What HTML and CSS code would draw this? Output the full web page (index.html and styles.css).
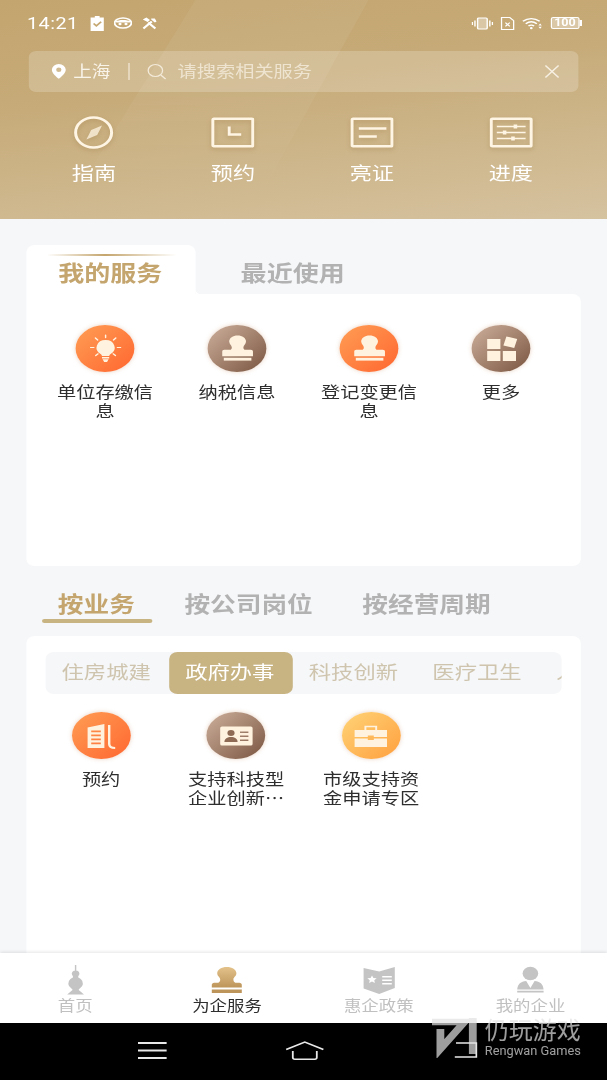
FILE: index.html
```html
<!DOCTYPE html>
<html lang="zh-CN">
<head>
    <meta charset="UTF-8">
    <meta name="viewport" content="width=device-width, initial-scale=1.0">
    <title>为企服务</title>
    <link rel="stylesheet" href="styles.css">
</head>
<body>
    <div class="screen">
        <header class="top">
            <div class="status">
                <span class="clock">14:21</span>
                <svg class="st-icon" width="12" height="15" viewBox="0 0 12 15"><path fill="#fff" d="M4 0h4v1.500h3.500v13.500h-11v-13.500h3.500z"/><path fill="none" stroke="#c6a873" stroke-width="1.600" d="M3 7.500l2.300 2.300 4-4"/></svg>
                <svg class="st-icon" width="15" height="12" viewBox="0 0 15 12"><ellipse cx="7.500" cy="6" rx="7" ry="5" fill="none" stroke="#fff" stroke-width="1.500"/><path fill="#fff" d="M1 4.500c3-2 10-2 13 0l-1 1h-11z"/><circle cx="5" cy="7" r="1.300" fill="#fff"/><circle cx="10" cy="7" r="1.300" fill="#fff"/></svg>
                <svg class="st-icon" width="13" height="13" viewBox="0 0 13 13"><path fill="none" stroke="#fff" stroke-width="1.800" d="M1.500 11.500l7-7M11.500 11.500l-6-6"/><path fill="#fff" d="M1 2.500l3-2 3 2.500-2 2zM8 1.500l3 0 1.500 3-1.500 1-3-3z"/></svg>
                <span class="status-right">
                    <svg width="18" height="13" viewBox="0 0 18 13"><rect x="5" y="1" width="8" height="11" rx="1" fill="rgba(255,255,255,.35)" stroke="#fff" stroke-width="1.200"/><path stroke="#fff" stroke-width="1.200" d="M2.800 3.500v6M15.200 3.500v6M.6 5v3M17.400 5v3"/></svg>
                    <svg width="12" height="15" viewBox="0 0 13 15"><path fill="none" stroke="#fff" stroke-width="1.200" d="M1 1h7.500l3.500 3.500v9.500h-11z"/><path stroke="#fff" stroke-width="1.200" d="M4.500 6.500l4 4M8.500 6.500l-4 4"/></svg>
                    <svg width="17" height="13" viewBox="0 0 18 13"><path fill="none" stroke="#fff" stroke-width="1.500" d="M.8 4.200c4.400-3.800 10.400-3.800 14.800 0M3.300 6.800c3-2.500 6.800-2.500 9.800 0M5.700 9.200c1.500-1.200 3.500-1.200 5 0"/><circle cx="8.200" cy="11.400" r="1.200" fill="#fff"/><path fill="#fff" d="M16 6.500l1.500 2h-3zM14.500 10h3l-1.500 2z"/></svg>
                    <span class="battery">100</span>
                </span>
            </div>

            <div class="search">
                <svg class="pin" width="12" height="15" viewBox="0 0 12 15"><path fill="#fff" fill-rule="evenodd" d="M6 0a5.800 5.800 0 0 1 5.800 5.800c0 3.500-3.500 6.800-5.800 9-2.300-2.200-5.800-5.500-5.800-9a5.800 5.800 0 0 1 5.800-5.800zm0 3.600a2.200 2.200 0 1 0 0 4.400 2.200 2.200 0 0 0 0-4.400z"/></svg>
                <span class="city">上海</span>
                <span class="search-sep"></span>
                <svg class="lens" width="17" height="17" viewBox="0 0 17 17"><circle cx="7.500" cy="7.500" r="6" fill="none" stroke="#f3ead9" stroke-width="1.100"/><path stroke="#f3ead9" stroke-width="1.100" d="M12 12l4 4"/></svg>
                <span class="placeholder">请搜索相关服务</span>
                <svg class="clear" width="12" height="13" viewBox="0 0 12 13"><path stroke="#f6efe2" stroke-width="1.200" d="M.5 .5l11 12M11.500 .5l-11 12"/></svg>
            </div>

            <div class="quick">
                <div class="quick-item">
                    <svg width="34" height="33" viewBox="0 0 34 33"><circle cx="17" cy="16.500" r="15" fill="none" stroke="#fff5e4" stroke-width="2.500"/><path fill="#fff5e4" d="M24 9.500l-4 9.500-9 4.500 4-9.500z" opacity=".75"/></svg>
                    <span>指南</span>
                </div>
                <div class="quick-item">
                    <svg width="36" height="30" viewBox="0 0 36 30"><rect x="1.300" y="1.300" width="33.400" height="27.400" rx="1" fill="none" stroke="#fff5e4" stroke-width="2.600"/><path fill="none" stroke="#fff5e4" stroke-width="2.400" d="M15 9v8h10"/></svg>
                    <span>预约</span>
                </div>
                <div class="quick-item">
                    <svg width="36" height="30" viewBox="0 0 36 30"><rect x="1.300" y="1.300" width="33.400" height="27.400" rx="1" fill="none" stroke="#fff5e4" stroke-width="2.600"/><path fill="none" stroke="#fff5e4" stroke-width="2.400" d="M7 11h23M7 19h15"/></svg>
                    <span>亮证</span>
                </div>
                <div class="quick-item">
                    <svg width="36" height="30" viewBox="0 0 36 30"><rect x="1.300" y="1.300" width="33.400" height="27.400" rx="1" fill="none" stroke="#fff5e4" stroke-width="2.600"/><path fill="none" stroke="#fff5e4" stroke-width="1.500" d="M6 9h24M6 15h24M6 21h24"/><path fill="#fff5e4" d="M20 7h3v4h-3zM11 13h3v4h-3zM18 19h3v4h-3z"/></svg>
                    <span>进度</span>
                </div>
            </div>
        </header>

        <main class="content">
            <div class="tabs">
                <div class="tab tab-active">我的服务</div>
                <div class="tab">最近使用</div>
            </div>
            <section class="panel panel-mine">
                <div class="svc-grid">
                    <div class="svc">
                        <span class="disc disc-orange">
                            <svg width="30" height="30" viewBox="0 0 30 30"><g fill="#fff3e0"><path d="M15 6a7.600 7.600 0 0 1 4.200 13.900c-.9.600-1.100 1.200-1.100 2.100h-6.200c0-.9-.2-1.500-1.100-2.100A7.600 7.600 0 0 1 15 6z"/><path d="M12 23h6v1.500h-6zM12.500 25.300h5l-1.300 2.700h-2.400z"/></g><path stroke="#fff3e0" stroke-width="1.200" stroke-linecap="round" d="M15 1v2.600M6.500 4l1.900 2M23.500 4l-1.900 2M2.500 13.500h2.700M24.800 13.500h2.700M6.800 21.500l1.900-1.700M23.200 21.500l-1.900-1.700"/></svg>
                        </span>
                        <p>单位存缴信息</p>
                    </div>
                    <div class="svc">
                        <span class="disc disc-brown">
                            <svg width="30" height="30" viewBox="0 0 30 30"><use href="#stamp"/></svg>
                        </span>
                        <p>纳税信息</p>
                    </div>
                    <div class="svc">
                        <span class="disc disc-orange">
                            <svg width="30" height="30" viewBox="0 0 30 30"><use href="#stamp"/></svg>
                        </span>
                        <p>登记变更信息</p>
                    </div>
                    <div class="svc">
                        <span class="disc disc-brown">
                            <svg width="30" height="30" viewBox="0 0 30 30"><g fill="#fff3e0"><rect x="3" y="5" width="11" height="10"/><rect x="3" y="17" width="11" height="10"/><rect x="16" y="17" width="11" height="10"/><path d="M19 2.500l9 2.500-2.500 9-9-2.500z"/></g></svg>
                        </span>
                        <p>更多</p>
                    </div>
                </div>
            </section>

            <div class="biz-tabs">
                <div class="biz-tab biz-tab-active">按业务</div>
                <div class="biz-tab">按公司岗位</div>
                <div class="biz-tab">按经营周期</div>
            </div>
            <section class="panel panel-biz">
                <div class="chips">
                    <div class="chip">住房城建</div>
                    <div class="chip chip-active">政府办事</div>
                    <div class="chip">科技创新</div>
                    <div class="chip">医疗卫生</div>
                    <div class="chip">人才服务</div>
                </div>
                <div class="svc-grid svc-grid-biz">
                    <div class="svc">
                        <span class="disc disc-orange">
                            <svg width="30" height="30" viewBox="0 0 30 30"><path fill="#fff3e0" fill-rule="evenodd" d="M4 6.500L18 3v24H4zM7 9.500v1.800H15V9.500zm0 4v1.800H15v-1.800zm0 4v1.800H15v-1.800zm0 4v1.800H15v-1.800z"/><path fill="none" stroke="#fff3e0" stroke-width="2" d="M22 4v19c0 2.500 1 4 5 4"/></svg>
                        </span>
                        <p>预约</p>
                    </div>
                    <div class="svc">
                        <span class="disc disc-brown">
                            <svg width="30" height="30" viewBox="0 0 30 30"><path fill="#fff3e0" fill-rule="evenodd" d="M3 5.500h24a1.500 1.500 0 0 1 1.500 1.500v16a1.500 1.500 0 0 1-1.500 1.500H3A1.500 1.500 0 0 1 1.500 23V7A1.500 1.500 0 0 1 3 5.500zM18 10.500V12h7v-1.500zm0 4V16h7v-1.500zm0 4V20h7v-1.500z"/><circle cx="10.500" cy="12" r="3" fill="#8f6b55"/><path fill="#8f6b55" d="M5 21c0-3.500 2.500-5 5.500-5s5.500 1.500 5.500 5z"/></svg>
                        </span>
                        <p>支持科技型企业创新…</p>
                    </div>
                    <div class="svc">
                        <span class="disc disc-yellow">
                            <svg width="30" height="30" viewBox="0 0 30 30"><path fill="none" stroke="#fff3e0" stroke-width="1.600" d="M10.500 9V5.500h9V9"/><path fill="#fff3e0" d="M1.500 9h27v7H17.500v-1.500h-5V16h-11zM1.500 17.500h11V19h5v-1.500h11V26h-27z"/></svg>
                        </span>
                        <p>市级支持资金申请专区</p>
                    </div>
                </div>
            </section>
        </main>

        <nav class="tabbar">
            <div class="nav-item">
                <svg width="26" height="30" viewBox="0 0 26 30"><path fill="#c4c4c4" d="M12.400 0h1.200v6h-1.200zM13 5.500a3.200 3.200 0 0 1 3 4.300c-.3.800-.9 1.400-.9 2.300 0 .9 1.400 1.300 2.400 2.200a6 6 0 0 1-.8 8.900c-.7.500-1.100 1-1.100 1.800l4.400 4.500H6l4.400-4.500c0-.8-.4-1.300-1.100-1.800a6 6 0 0 1-.8-8.900c1-.9 2.400-1.300 2.400-2.200 0-.9-.6-1.500-.9-2.300A3.200 3.200 0 0 1 13 5.500z"/></svg>
                <span>首页</span>
            </div>
            <div class="nav-item nav-item-active">
                <svg width="30" height="30" viewBox="0 0 30 30"><defs><linearGradient id="gold" x1="0" y1="0" x2="0" y2="1"><stop offset="0" stop-color="#e3c28a"/><stop offset="1" stop-color="#bd955b"/></linearGradient></defs><path fill="url(#gold)" d="M15 2c4.400 0 8 2.600 8 6.300 0 3-2.500 3.800-2.500 6.200 0 1.500.5 2.500 1.500 3.200h3.500c1.200 0 2 1 2 2v2.800h-25v-2.800c0-1 .8-2 2-2H8c1-.7 1.500-1.700 1.500-3.200 0-2.400-2.500-3.200-2.500-6.200C7 4.600 10.600 2 15 2z"/><rect x="2.500" y="24.500" width="25" height="3.500" fill="#bd955b"/></svg>
                <span>为企服务</span>
            </div>
            <div class="nav-item">
                <svg width="30" height="30" viewBox="0 0 30 30"><path fill="#c4c4c4" fill-rule="evenodd" d="M2 3l13 3.500L28 2v21l-13 6L2 23.500zM17.500 11v1.500h8V11zm0 3.500V16h8v-1.500zm0 3.500v1.500h8V18z"/><path fill="#fff" d="M9 10.500l1.200 2.500 2.700.3-2 1.900.5 2.700L9 16.600l-2.400 1.300.5-2.700-2-1.900 2.700-.3z"/></svg>
                <span>惠企政策</span>
            </div>
            <div class="nav-item">
                <svg width="30" height="30" viewBox="0 0 30 30"><ellipse cx="15" cy="8.500" rx="6.500" ry="6.800" fill="#c4c4c4"/><path fill="#c4c4c4" d="M11.500 16l3.500 7 3.500-7c4.500.5 7 2.800 7.500 8.500H4c.5-5.700 3-8 7.500-8.500zM4 25.800h22V27.500H4z"/></svg>
                <span>我的企业</span>
            </div>
        </nav>

        <div class="sysbar">
            <svg class="sys-menu" width="24" height="17" viewBox="0 0 24 17"><path stroke="#e8e8e8" stroke-width="1.800" d="M0 1h24M0 8.500h24M0 16h24"/></svg>
            <svg class="sys-home" width="32" height="19" viewBox="0 0 32 19"><path fill="none" stroke="#e8e8e8" stroke-width="1.500" d="M.5 8.500L16 1l15.500 7.500M6 10v6.500c0 1 .7 1.700 1.700 1.700h16.600c1 0 1.700-.7 1.700-1.700V10"/></svg>
            <svg class="sys-back" width="20" height="16" viewBox="0 0 20 16"><path fill="none" stroke="#e8e8e8" stroke-width="1.500" d="M1 15h18V1H2"/></svg>
        </div>

        <div class="watermark">
            <svg width="38" height="40" viewBox="0 0 38 40"><path fill="none" stroke="rgba(225,225,225,.7)" stroke-width="6.500" d="M0 4h27L7 31V11M34 0v36"/></svg>
            <div class="wm-text">
                <div class="wm-cn">仍玩游戏</div>
                <div class="wm-en">Rengwan Games</div>
            </div>
        </div>
    </div>

    <svg class="defs" width="0" height="0"><defs>
        <g id="stamp" fill="#fff3e0"><path d="M15 1.500c3.900 0 7 2.600 7 6 0 2.800-2.200 3.800-2.200 6.200 0 .8.300 1.500.9 2h5.300c1.100 0 1.800.8 1.800 1.800v4.700H2.200v-4.700c0-1 .7-1.800 1.800-1.800h5.300c.6-.5.900-1.200.9-2 0-2.400-2.200-3.400-2.200-6.200 0-3.400 3.100-6 7-6z"/><rect x="3.500" y="23.800" width="23" height="2.800"/></g>
    </defs></svg>
</body>
</html>
```

FILE: styles.css
```css
:root {
    --gold: #c4a56d;
    --chip-gold: #c8b382;
    --page-bg: #f6f7f9;
    --text: #2e2e2e;
    --muted: #b2b2b2;
}

* {
    margin: 0;
    padding: 0;
    box-sizing: border-box;
}

html, body {
    width: 607px;
    height: 1080px;
    overflow: hidden;
}

body {
    font-family: "Noto Sans CJK SC", "Noto Sans", sans-serif;
    color: var(--text);
    background-color: var(--page-bg);
}

.defs {
    display: block;
}

/* the capture is stretched sideways by 1.2, everything below is laid out at 506px */
.screen {
    position: relative;
    width: 505.83px;
    height: 1080px;
    display: flex;
    flex-direction: column;
    transform: scaleX(1.2);
    transform-origin: 0 0;
    background-color: var(--page-bg);
}

/* Header */
.top {
    position: relative;
    flex: none;
    height: 219px;
    padding: 13px 24px 0;
    background: linear-gradient(172deg, #c3a56f 0%, #c6aa77 35%, #d5c29f 100%);
    overflow: hidden;
}

.top::before {
    content: "";
    position: absolute;
    inset: 0;
    background: rgba(255, 255, 255, 0.06);
    clip-path: polygon(163px 0, 307px 0, 206px 219px, 50px 219px);
    -webkit-mask-image: linear-gradient(to bottom, #000 35%, transparent 90%);
    mask-image: linear-gradient(to bottom, #000 35%, transparent 90%);
}

.status {
    position: relative;
    display: flex;
    align-items: center;
    height: 20px;
    color: #fff;
}

.clock {
    font-family: Roboto, sans-serif;
    font-size: 16.5px;
    letter-spacing: 0.4px;
    margin-left: -1.5px;
    margin-right: 9.5px;
}

.st-icon {
    margin-right: 8px;
}

.status-right {
    margin-left: auto;
    display: flex;
    align-items: center;
    gap: 5px;
    margin-right: -2px;
}

.status-right svg:first-child {
    margin-right: 1px;
}

.status-right svg:nth-child(3) {
    margin: 0 2px 0 1px;
}

.battery {
    position: relative;
    width: 24px;
    height: 12px;
    margin-right: 1px;
    border: 1px solid #fff;
    border-radius: 2px;
    background: rgba(255, 255, 255, 0.35);
    font-family: Roboto, sans-serif;
    font-size: 10.5px;
    font-weight: 700;
    line-height: 10px;
    text-align: center;
}

.battery::after {
    content: "";
    position: absolute;
    right: -3px;
    top: 2px;
    width: 1.5px;
    height: 6px;
    background: #fff;
}

.search {
    position: relative;
    display: flex;
    align-items: center;
    height: 41px;
    margin-top: 18px;
    padding: 0 16px 0 19px;
    border-radius: 6px;
    background: rgba(255, 255, 255, 0.2);
    color: #fff;
}

.city {
    margin: 0 0 4px 6px;
    font-size: 15.500px;
    color: #f9f4ea;
}

.search-sep {
    width: 1px;
    height: 17px;
    margin: 0 14px 0 15px;
    background: #f3ead9;
}

.placeholder {
    margin: 0 0 4px 9px;
    font-size: 16px;
    color: #eee4d0;
}

.lens {
    margin-left: 0;
}

.clear {
    margin-left: auto;
}

.quick {
    position: relative;
    display: grid;
    grid-template-columns: repeat(4, 115.8px);
    margin: 24px 0 0 -3.6px;
}

.quick-item {
    display: flex;
    flex-direction: column;
    align-items: center;
    color: #fff;
    font-size: 18.500px;
    line-height: 22px;
}

.quick-item svg {
    height: 33px;
    filter: drop-shadow(0 2px 2px rgba(150, 115, 60, 0.35));
}

.quick-item span {
    margin-top: 12px;
}

/* Content */
.content {
    flex: 1;
    min-height: 0;
    padding: 26px 22px 0;
    overflow: hidden;
}

.tabs {
    display: flex;
    height: 49px;
}

.tab {
    position: relative;
    font-size: 21.700px;
    font-weight: 700;
    line-height: 22px;
    padding-top: 16px;
    color: var(--muted);
    margin-left: 37.5px;
}

.tab-active {
    width: 141px;
    margin-left: 0;
    padding-left: 26.5px;
    border-radius: 7px 7px 0 0;
    background: #fff;
    color: var(--gold);
}

.tab-active::before {
    content: "";
    position: absolute;
    top: 9px;
    left: 17px;
    width: 108px;
    height: 2px;
    background: linear-gradient(90deg, rgba(196, 165, 109, 0), #c4a56d 45%, rgba(196, 165, 109, 0));
}

.tab-active::after {
    content: "";
    position: absolute;
    right: -5px;
    bottom: 0;
    width: 5px;
    height: 5px;
    background: radial-gradient(circle at 100% 0, transparent 5px, #fff 5.5px);
}

.panel {
    background: #fff;
    border-radius: 0 7px 7px 7px;
}

.panel-mine {
    height: 272px;
    padding: 31px 11px 0 10.5px;
}

.svc-grid {
    display: grid;
    grid-template-columns: repeat(4, 110px);
}

.svc-grid-biz {
    grid-template-columns: repeat(4, 112.500px);
    margin-top: 18px;
}

.svc {
    display: flex;
    flex-direction: column;
    align-items: center;
}

.svc p {
    width: 80px;
    margin-top: 10px;
    font-size: 16px;
    line-height: 19px;
    text-align: center;
}

.disc {
    display: flex;
    align-items: center;
    justify-content: center;
    width: 49px;
    height: 47px;
    border-radius: 50%;
    box-shadow: 0 0 4px rgba(200, 140, 100, 0.4);
}

.disc-orange {
    background: linear-gradient(135deg, #ff9e55, #ff6630);
}

.disc-brown {
    background: linear-gradient(135deg, #cdb09c, #7a5540);
}

.disc-yellow {
    background: linear-gradient(135deg, #ffd477, #ff9f3e);
}

.biz-tabs {
    display: flex;
    gap: 41.3px;
    align-items: flex-start;
    height: 70px;
    padding: 26px 0 0 26.2px;
}

.biz-tab {
    position: relative;
    font-size: 21.400px;
    font-weight: 700;
    line-height: 22px;
    color: var(--muted);
}

.biz-tab-active {
    color: var(--gold);
}

.biz-tab-active::after {
    content: "";
    position: absolute;
    left: -13px;
    right: -15px;
    top: 27px;
    height: 4px;
    border-radius: 2px;
    background: var(--chip-gold);
}

.panel-biz {
    height: 340px;
    padding: 16px 6px 0;
    border-radius: 7px 7px 0 0;
}

.chips {
    display: flex;
    width: 429.5px;
    height: 42px;
    margin-left: 10px;
    border-radius: 7px;
    background: var(--page-bg);
    overflow: hidden;
}

.chip {
    flex: none;
    width: 103px;
    padding-right: 2px;
    border-radius: 7px;
    font-size: 18.600px;
    line-height: 37px;
    text-align: center;
    color: #cfc5ae;
}

.chip-active {
    background: var(--chip-gold);
    color: #fff;
}

/* Bottom bars */
.tabbar {
    flex: none;
    display: grid;
    grid-template-columns: repeat(4, 1fr);
    height: 70px;
    padding-top: 12px;
    background: #fff;
    box-shadow: 0 -1px 3px rgba(0, 0, 0, 0.1);
}

.nav-item {
    display: flex;
    flex-direction: column;
    align-items: center;
    padding-right: 1px;
    font-size: 14.500px;
    line-height: 18px;
    color: #c0c0c0;
}

.nav-item span {
    margin-top: 1px;
}

.nav-item-active {
    color: var(--text);
}

.sysbar {
    flex: none;
    display: flex;
    align-items: center;
    height: 57px;
    padding: 0 0 3px 115px;
    background: #000;
}

.sys-home {
    margin-left: 98.5px;
}

.sys-back {
    margin-left: 108px;
}

.watermark {
    position: absolute;
    left: 360px;
    top: 1018px;
    display: flex;
    gap: 6px;
    color: rgba(225, 225, 225, 0.7);
}

.wm-cn {
    margin-top: -1px;
    font-size: 24px;
    line-height: 24px;
    white-space: nowrap;
    transform: scaleX(0.8333);
    transform-origin: 0 0;
}

.wm-en {
    margin-top: 2px;
    font-family: Roboto, sans-serif;
    font-size: 13px;
    line-height: 16px;
    white-space: nowrap;
    transform: scaleX(0.82);
    transform-origin: 0 0;
}
```
